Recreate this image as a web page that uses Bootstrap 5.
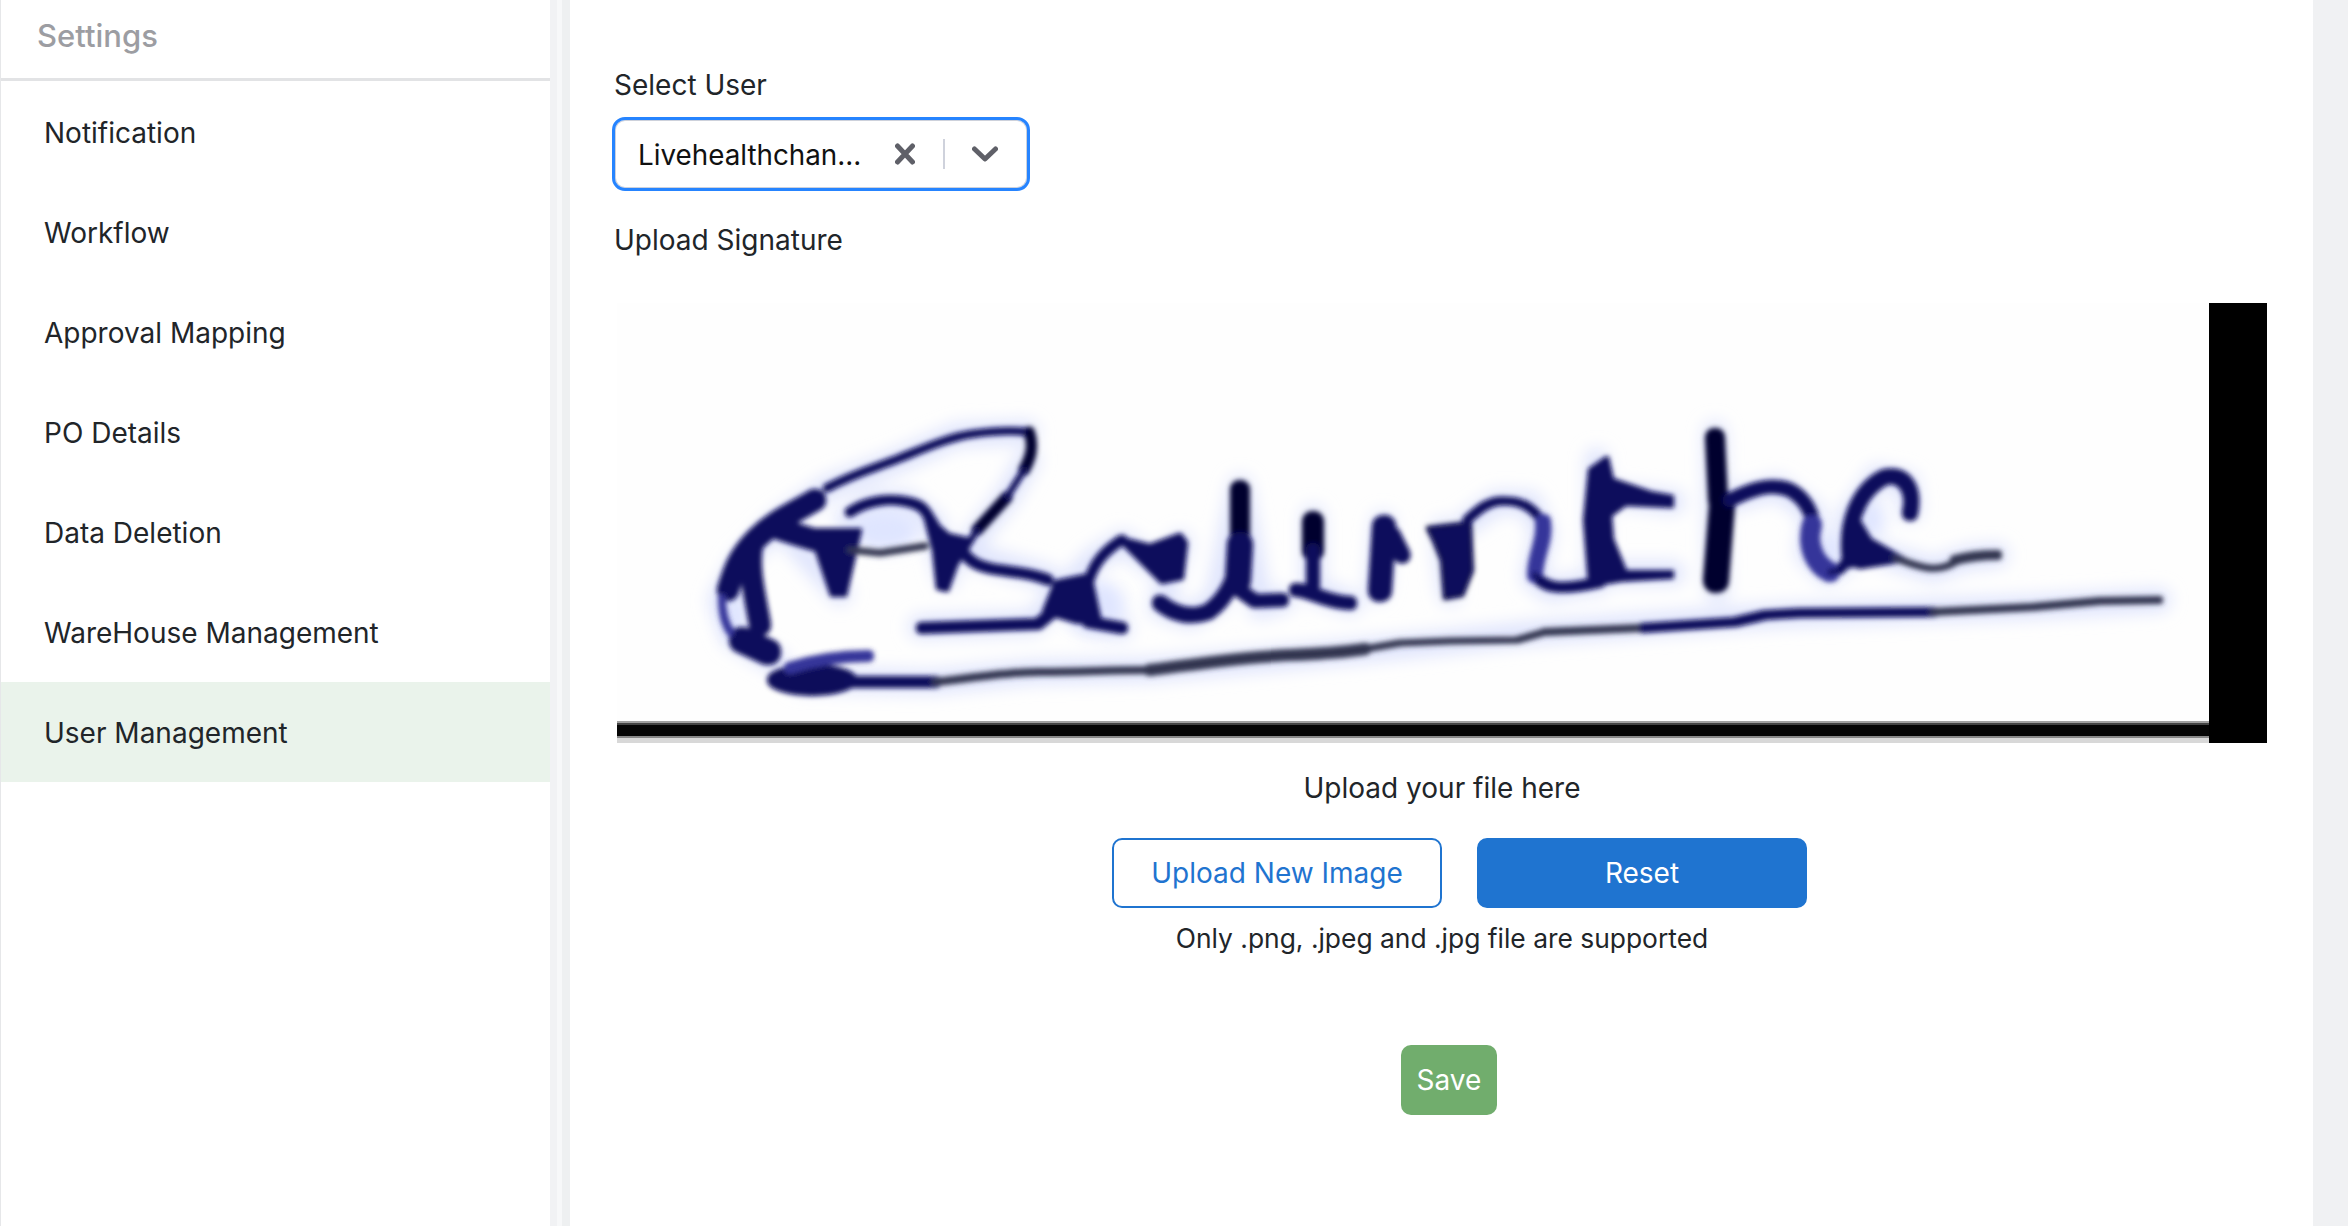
<!DOCTYPE html>
<html lang="en">
<head>
<meta charset="utf-8">
<title>Settings</title>
<link href="https://cdn.jsdelivr.net/npm/bootstrap@5.3.0/dist/css/bootstrap.min.css" rel="stylesheet">
<style>
html, body { height: 1226px; overflow: hidden; }
body { font-family: Inter, "Liberation Sans", sans-serif; font-size: 28px; line-height: 40px; color: #212529; background: #f0f1f3; }
.shell { height: 1226px; }
.side-panel { width: 550px; flex: none; background: #fff; border-left: 1px solid #e6e7e9; }
.side-head { height: 81px; padding-left: 36px; padding-top: 16px; font-size: 31px; font-weight: 500; color: #9c9da2; border-bottom: 3px solid #e2e3e5; }
.side-items { margin-top: 1px; }
.side-item.list-group-item { height: 100px; display: flex; align-items: center; padding: 1px 0 0 43px; border: 0; font-size: 28px; line-height: 40px; color: #212529; background: transparent; border-radius: 0; }
.side-item.list-group-item.picked { background: #eaf3eb; }
.gutter-strip { width: 20px; flex: none; background: linear-gradient(90deg, #f1f2f4 0 7px, #f7f8f9 7px 12px, #eef0f1 12px 20px); }
.main-pane { width: 1743px; flex: none; background: #fff; padding: 65px 0 0 44px; }
.field-label { font-size: 28px; line-height: 40px; color: #212529; }
.user-picker { width: 418px; height: 74px; margin: 12px 0 0 -2px; border: 3px solid #2684ff; border-radius: 13px; box-shadow: inset 0 0 0 1px #cdd1db; padding-left: 23px; background: #fff; }
.user-value { width: 245px; padding-top: 1px; color: #111; font-size: 27.8px; white-space: nowrap; overflow: hidden; }
.picker-sep { width: 2px; height: 30px; background: #cfd2dc; }
.clear-ico { margin-left: 12px; margin-right: 28px; }
.chev-ico { margin-left: 27px; }
.upload-label { margin-top: 29px; }
.upload-zone { width: 1650px; margin-left: 3px; }
.sign-pic { display: block; width: 1650px; height: 440px; margin-top: 43px; }
.upload-note { margin-top: 25px; text-align: center; }
.upload-btns { margin-top: 30px; padding-left: 35px; gap: 35px; }
.wide-btn.btn { width: 330px; height: 70px; font-size: 28px; line-height: 40px; border-radius: 10px; padding: 0; border: 2px solid #1f74d0; }
.wide-btn.ghost { background: #fff; color: #1f74d0; }
.wide-btn.solid { background: #1f74d0; color: #fff; }
.upload-hint { margin-top: 10px; text-align: center; font-size: 26.4px; }
.save-row { margin-top: 87px; padding-left: 14px; }
.save-btn.btn { width: 96px; height: 70px; padding: 0; font-size: 28px; line-height: 40px; border: 0; border-radius: 10px; background: #71ad6d; color: #fff; }
.halo path { fill: none; stroke: #e0e5fd; stroke-linecap: round; stroke-linejoin: round; }
.ink path { fill: none; stroke: #0a0a5c; stroke-linecap: round; stroke-linejoin: round; }
.ink .solid-ink { fill: #0a0a5c; stroke-width: 2; }
.ink .dark-ink { stroke: #06062e; }
.ink .grey-ink { stroke: #33354f; }
.ink .pale-ink { stroke: #34349a; }
.ink .blob-ink { fill: #07075a; stroke: none; }
</style>
</head>
<body>
<div class="shell d-flex">
  <aside class="side-panel">
    <div class="side-head">Settings</div>
    <div class="list-group list-group-flush side-items">
      <a class="list-group-item side-item" href="#">Notification</a>
      <a class="list-group-item side-item" href="#">Workflow</a>
      <a class="list-group-item side-item" href="#">Approval Mapping</a>
      <a class="list-group-item side-item" href="#">PO Details</a>
      <a class="list-group-item side-item" href="#">Data Deletion</a>
      <a class="list-group-item side-item" href="#">WareHouse Management</a>
      <a class="list-group-item side-item picked" href="#">User Management</a>
    </div>
  </aside>
  <div class="gutter-strip"></div>
  <main class="main-pane">
    <div class="field-label">Select User</div>
    <div class="user-picker d-flex align-items-center">
      <span class="user-value">Livehealthchan...</span>
      <svg class="clear-ico" width="20" height="22" viewBox="0 0 20 22"><path d="M2.5 3 17.5 19M17.5 3 2.5 19" fill="none" stroke="#5f6068" stroke-width="5" stroke-linecap="round"/></svg>
      <span class="picker-sep"></span>
      <svg class="chev-ico" width="26" height="16" viewBox="0 0 26 16"><path d="M2.5 3 13 13 23.500 3" fill="none" stroke="#5f6068" stroke-width="5" stroke-linecap="round" stroke-linejoin="round"/></svg>
    </div>
    <div class="field-label upload-label">Upload Signature</div>
    <div class="upload-zone">
      <svg class="sign-pic" viewBox="617 303 1650 440" role="img" aria-label="Signature">
        <defs>
          <filter id="softA" x="-5%" y="-20%" width="110%" height="140%"><feMorphology operator="dilate" radius="1.2"/><feGaussianBlur stdDeviation="2.8"/></filter>
          <filter id="softB" x="-5%" y="-20%" width="110%" height="140%"><feGaussianBlur stdDeviation="8"/></filter>
        </defs>
        <rect x="617" y="303" width="1650" height="440" fill="#fefefe"/>
        <g class="halo" filter="url(#softB)" stroke-width="24">
          <path d="M1027 432 957 435 900 460 827 488 777 523 740 563 720 600 733 637 777 663"/>
          <path d="M847 520 873 503 907 502 933 523 947 577M777 523 840 593M1028 460 1007 497 963 553 1047 577 1087 623 1120 628M920 627 1033 623 1093 560 1123 542 1157 567 1180 543 1160 607 1190 617 1217 600 1240 487 1260 607 1283 600M1313 517 1313 590 1350 603M1383 523 1377 590M1443 530 1450 593M1467 523 1497 502 1530 503 1543 533 1533 577 1550 590 1590 583M1597 460 1597 583M1600 493 1673 502M1600 573 1673 573M1715 433 1717 590M1730 500 1777 487 1813 513 1807 553 1827 573 1850 557 1847 520 1877 477 1907 483 1910 510M1850 543 1900 560 1933 570 1967 558 1997 555"/>
          <path d="M800 680 933 682 1033 672 1150 670 1350 652 1543 632 1787 615 2033 607 2159 600"/>
        </g>
        <g fill="#dfe5ff" filter="url(#softB)">
          <ellipse cx="885" cy="530" rx="35" ry="22"/><ellipse cx="735" cy="612" rx="12" ry="26"/><ellipse cx="1095" cy="605" rx="30" ry="25"/><ellipse cx="1870" cy="520" rx="15" ry="20"/><ellipse cx="1830" cy="550" rx="12" ry="20"/>
        </g>
        <g class="ink" filter="url(#softA)">
          <path stroke-width="6" d="M827 488C855 473 875 468 900 458S950 437 972 434 1010 430 1027 432"/>
          <path class="dark-ink" stroke-width="9" d="M1029 432C1034 445 1031 458 1024 470M1007 497 977 530"/>
          <path stroke-width="4" d="M1024 470 1007 497M977 530 963 553"/>
          <path stroke-width="20" d="M815 500C795 512 775 520 757 538S734 570 728 590"/>
          <path class="pale-ink" stroke-width="6" d="M722 598C722 618 728 632 738 640"/>
          <path stroke-width="20" d="M752 545C748 570 755 595 760 625"/>
          <path stroke-width="24" d="M742 640 768 652"/>
          <path stroke-width="20" d="M777 528C800 536 815 540 833 545"/>
          <path class="solid-ink" d="M810 530 860 530 845 595 832 595Z"/>
          <path stroke-width="8" d="M850 512C868 500 890 498 908 502S925 512 934 525"/>
          <path class="grey-ink" stroke-width="5" d="M850 550 880 553 925 546"/>
          <path class="solid-ink" d="M925 515 948 535 970 540 956 565 947 590 938 588 934 550Z"/>
          <path stroke-width="9" d="M963 552C972 565 985 568 1000 570S1035 574 1048 580"/>
          <path class="solid-ink" d="M1056 582 1090 575 1100 622 1078 622 1044 612Z"/>
          <path stroke-width="10" d="M922 628 1038 624 1060 606"/>
          <path stroke-width="10" d="M1088 622 1122 628"/>
          <path stroke-width="8" d="M1088 585C1092 565 1105 550 1122 540"/>
          <path class="solid-ink" d="M1118 538 1150 546 1180 535 1186 543 1182 578 1162 582Z"/>
          <path stroke-width="14" d="M1160 603C1175 615 1192 618 1208 612 1225 600 1232 585 1236 570"/>
          <path class="dark-ink" stroke-width="18" d="M1240 490 1240 560"/>
          <path stroke-width="24" d="M1240 545 1238 580"/>
          <path stroke-width="12" d="M1232 585 1255 601 1282 600"/>
          <path class="dark-ink" stroke-width="20" d="M1313 522 1313 550"/>
          <path stroke-width="12" d="M1313 550 1313 585"/>
          <path stroke-width="12" d="M1296 590C1310 590 1325 602 1350 603"/>
          <path stroke-width="22" d="M1384 527 1380 590"/>
          <path stroke-width="15" d="M1392 535 1402 555"/>
          <path class="dark-ink solid-ink" d="M1428 528 1470 523 1472 570 1462 595 1445 598 1442 560 1434 540Z"/>
          <path stroke-width="7" d="M1467 520C1480 508 1490 500 1505 501 1525 501 1535 510 1542 522"/>
          <path class="pale-ink" stroke-width="14" d="M1543 522C1546 540 1535 555 1535 575"/>
          <path stroke-width="9" d="M1535 575C1545 590 1565 590 1600 582"/>
          <path class="solid-ink" d="M1590 470 1607 458 1612 480 1650 493 1672 497 1672 506 1625 504 1610 515 1612 540 1625 572 1672 572 1672 577 1620 580 1590 585 1585 520Z"/>
          <path class="dark-ink" stroke-width="18" d="M1715 438 1718 500"/>
          <path class="dark-ink" stroke-width="24" d="M1722 505 1716 580"/>
          <path stroke-width="12" d="M1730 500C1750 490 1770 482 1790 490 1805 498 1815 515 1812 530"/>
          <path class="pale-ink" stroke-width="18" d="M1812 525C1806 545 1815 565 1830 572"/>
          <path stroke-width="8" d="M1830 572C1840 572 1846 565 1848 555"/>
          <path stroke-width="14" d="M1850 560C1845 525 1858 490 1885 477 1905 473 1915 490 1910 513"/>
          <path class="solid-ink" d="M1850 515 1858 520 1870 540 1905 560 1860 567 1848 562Z"/>
          <path class="grey-ink" stroke-width="5" d="M1895 558C1915 565 1935 575 1955 562"/>
          <path class="grey-ink" stroke-width="8" d="M1955 560C1970 556 1985 555 1997 555"/>
          <ellipse class="blob-ink" cx="812" cy="680" rx="44" ry="15"/>
          <path class="pale-ink" stroke-width="10" d="M790 668C815 660 845 656 868 656"/>
          <path stroke-width="10" d="M850 682 935 682"/>
          <path class="grey-ink" stroke-width="6" d="M935 682C960 680 1000 672 1040 672S1110 670 1150 670"/>
          <path class="grey-ink" stroke-width="10" d="M1150 670C1190 665 1240 657 1290 655S1340 652 1365 649"/>
          <path class="grey-ink" stroke-width="5" d="M1365 649 1400 643 1450 641 1517 640 1545 632"/>
          <path class="grey-ink" stroke-width="6" d="M1545 632 1640 628"/>
          <path stroke-width="8" d="M1643 628 1735 622 1765 615 1800 613 1933 612"/>
          <path class="grey-ink" stroke-width="6" d="M1933 612 2033 607 2100 601 2159 600"/>
        </g>
        <rect x="617" y="721" width="1592" height="2" fill="#a0a0a0"/>
        <rect x="617" y="723" width="1592" height="2" fill="#444"/>
        <rect x="617" y="725" width="1592" height="11" fill="#050505"/>
        <rect x="617" y="736" width="1592" height="2" fill="#888"/>
        <rect x="617" y="738" width="1592" height="5" fill="#d8d8d8"/>
        <rect x="2209" y="303" width="58" height="440" fill="#000"/>
      </svg>
      <div class="upload-note">Upload your file here</div>
      <div class="upload-btns d-flex justify-content-center">
        <button type="button" class="btn wide-btn ghost">Upload New Image</button>
        <button type="button" class="btn wide-btn solid">Reset</button>
      </div>
      <div class="upload-hint">Only .png, .jpeg and .jpg file are supported</div>
      <div class="save-row d-flex justify-content-center">
        <button type="button" class="btn save-btn">Save</button>
      </div>
    </div>
  </main>
  <div class="flex-grow-1"></div>
</div>
<script src="https://cdn.jsdelivr.net/npm/bootstrap@5.3.0/dist/js/bootstrap.bundle.min.js"></script>
</body>
</html>
